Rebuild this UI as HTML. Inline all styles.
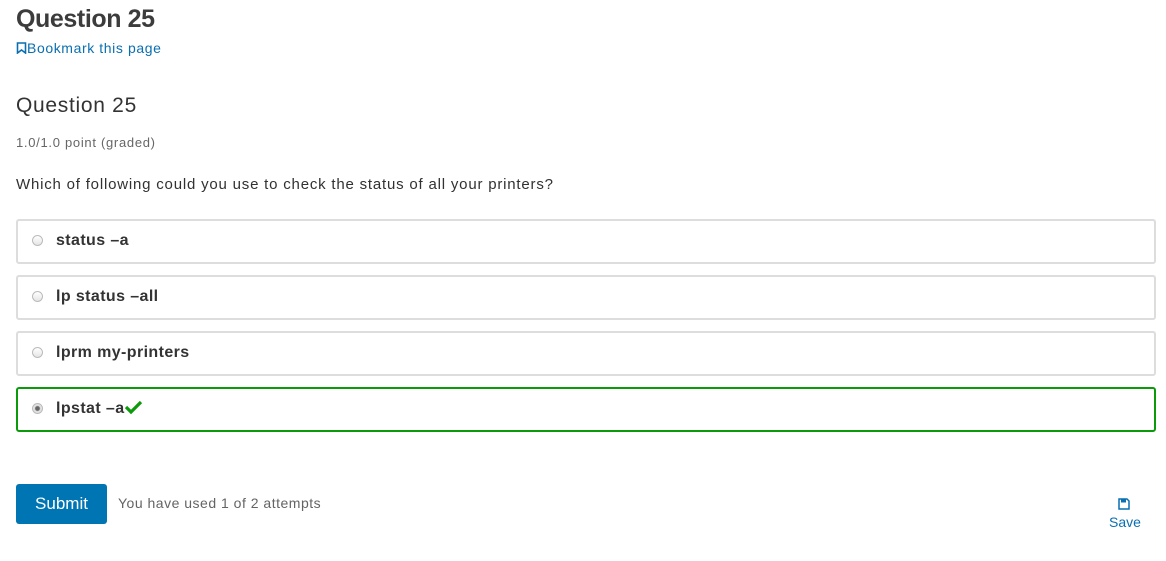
<!DOCTYPE html>
<html><head><meta charset="utf-8"><style>
body{margin:0;width:1166px;height:561px;background:#fff;font-family:"Liberation Sans",sans-serif;color:#313131;position:relative;overflow:hidden}
.a{position:absolute;white-space:nowrap}
.opt{position:absolute;left:16px;width:1136px;height:41px;border:2px solid #ddd;border-radius:3px}
.opt .r{position:absolute;left:14px;top:14px;width:9px;height:9px;border:1px solid #bbb;border-radius:50%;background:linear-gradient(#fff,#e4e4e4)}
.opt .t{position:absolute;left:38px;top:11px;font-size:16px;font-weight:bold;color:#333;letter-spacing:0.4px}
</style></head><body>
<div class="a" style="left:16px;top:5px;font-size:25px;font-weight:bold;color:#3c3c3c;letter-spacing:-0.4px">Question 25</div>
<div class="a" style="left:16px;top:40px;font-size:14px;color:#0a6fb0;letter-spacing:0.6px">
<svg width="11" height="12" viewBox="0 0 11 12" style="vertical-align:-1px"><path d="M1.5 1h8v10l-4-3-4 3z" fill="none" stroke="#0a6fb0" stroke-width="1.6"/></svg>Bookmark this page</div>
<div class="a" style="left:16px;top:94px;font-size:21px;color:#333;letter-spacing:0.7px">Question 25</div>
<div class="a" style="left:16px;top:135px;font-size:13px;color:#666;letter-spacing:0.7px">1.0/1.0 point (graded)</div>
<div class="a" style="left:16px;top:176px;font-size:15px;color:#313131;letter-spacing:0.8px">Which of following could you use to check the status of all your printers?</div>
<div class="opt" style="top:219px"><div class="r"></div><div class="t">status –a</div></div>
<div class="opt" style="top:275px"><div class="r"></div><div class="t">lp status –all</div></div>
<div class="opt" style="top:331px"><div class="r"></div><div class="t">lprm my-printers</div></div>
<div class="opt" style="top:387px;border-color:#0a9a0a"><div class="r" style="background:radial-gradient(#666 30%,#ddd 45%,#eee)"></div><div class="t">lpstat –a<svg width="17" height="14" viewBox="0 0 17 14" style="vertical-align:-1px"><path d="M1 7l5 5 10-10" fill="none" stroke="#0a9a0a" stroke-width="3.2"/></svg></div></div>
<div class="a" style="left:16px;top:484px;width:91px;height:40px;background:#0075b4;border-radius:3px;color:#fff;font-size:17px;text-align:center;line-height:39px">Submit</div>
<div class="a" style="left:118px;top:495px;font-size:14px;color:#646464;letter-spacing:0.5px">You have used 1 of 2 attempts</div>
<svg class="a" style="left:1118px;top:498px" width="12" height="12" viewBox="0 0 12 12"><path d="M1 1h8l2 2v8H1z" fill="none" stroke="#0a6fb0" stroke-width="1.5"/><rect x="3" y="1.5" width="5" height="3" fill="#0a6fb0"/></svg>
<div class="a" style="left:1109px;top:514px;font-size:14px;color:#0a6fb0">Save</div>
</body></html>
